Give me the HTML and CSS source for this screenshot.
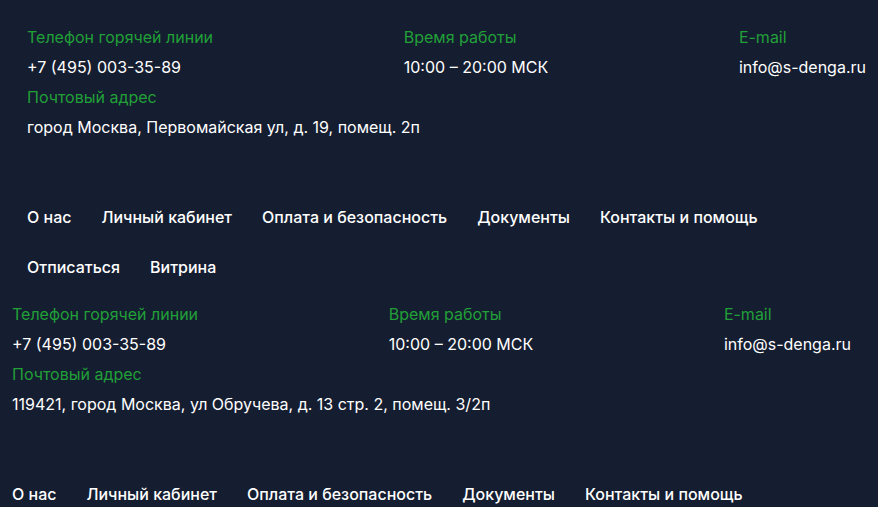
FILE: index.html
```html
<!DOCTYPE html>
<html lang="ru">

<head>
    <meta charset="UTF-8">
    <title>Контакты</title>
    <link rel="stylesheet" href="styles.css">
</head>

<body>
    <footer class="footer footer-main">
        <div class="contacts">
            <div class="contacts-row">
                <div class="contact-item">
                    <div class="contact-label">Телефон горячей линии</div>
                    <div class="contact-value">+7 (495) 003-35-89</div>
                </div>
                <div class="contact-item">
                    <div class="contact-label">Время работы</div>
                    <div class="contact-value">10:00 – 20:00 МСК</div>
                </div>
                <div class="contact-item">
                    <div class="contact-label">E-mail</div>
                    <div class="contact-value">info@s-denga.ru</div>
                </div>
            </div>
            <div class="contact-item">
                <div class="contact-label">Почтовый адрес</div>
                <div class="contact-value">город Москва, Первомайская ул, д. 19, помещ. 2п</div>
            </div>
        </div>

        <nav class="footer-nav">
            <a href="#">О нас</a>
            <a href="#">Личный кабинет</a>
            <a href="#">Оплата и безопасность</a>
            <a href="#">Документы</a>
            <a href="#">Контакты и помощь</a>
            <a href="#">Отписаться</a>
            <a href="#">Витрина</a>
        </nav>
    </footer>

    <footer class="footer footer-alt">
        <div class="contacts">
            <div class="contacts-row">
                <div class="contact-item">
                    <div class="contact-label">Телефон горячей линии</div>
                    <div class="contact-value">+7 (495) 003-35-89</div>
                </div>
                <div class="contact-item">
                    <div class="contact-label">Время работы</div>
                    <div class="contact-value">10:00 – 20:00 МСК</div>
                </div>
                <div class="contact-item">
                    <div class="contact-label">E-mail</div>
                    <div class="contact-value">info@s-denga.ru</div>
                </div>
            </div>
            <div class="contact-item">
                <div class="contact-label">Почтовый адрес</div>
                <div class="contact-value">119421, город Москва, ул Обручева, д. 13 стр. 2, помещ. 3/2п</div>
            </div>
        </div>

        <nav class="footer-nav">
            <a href="#">О нас</a>
            <a href="#">Личный кабинет</a>
            <a href="#">Оплата и безопасность</a>
            <a href="#">Документы</a>
            <a href="#">Контакты и помощь</a>
            <a href="#">Отписаться</a>
            <a href="#">Витрина</a>
        </nav>
    </footer>
</body>

</html>
```

FILE: styles.css
```css
body,
html {
    margin: 0;
    padding: 0;
    background: #151d30;
    color: #ffffff;
    font-family: Inter, "Noto Sans", sans-serif;
    font-size: 16px;
    overflow: hidden;
}

.footer {
    box-sizing: border-box;
}

.footer-main {
    padding: 27px 12px 0 27px;
}

.footer-alt {
    padding: 12px 27px 0 12px;
}

.contacts-row {
    display: flex;
    justify-content: space-between;
}

.contact-label {
    color: #21a038;
    line-height: 20px;
    margin-bottom: 10px;
}

.contact-value {
    line-height: 20px;
    margin-bottom: 10px;
}

.footer-nav {
    display: flex;
    flex-wrap: wrap;
    column-gap: 30px;
    margin-top: 55px;
}

.footer-nav a {
    color: #ffffff;
    text-decoration: none;
    font-weight: 500;
    line-height: 20px;
    padding: 15px 0;
}

.footer-nav a:hover {
    color: #21a038;
}
```
